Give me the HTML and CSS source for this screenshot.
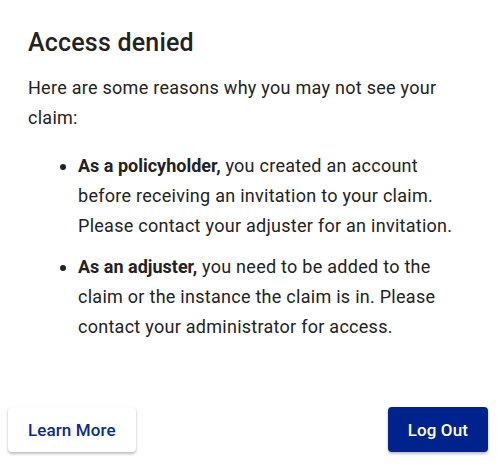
FILE: index.html
```html
<!DOCTYPE html>
<html lang="en">
<head>
<meta charset="utf-8">
<title>Access denied</title>
<link rel="stylesheet" href="styles.css">
</head>
<body>
<div class="dialog">
  <div class="content">
    <h1 class="title">Access denied</h1>
    <p class="intro">Here are some reasons why you may not see your claim:</p>
    <ul class="reasons">
      <li><strong>As a policyholder,</strong> you created an account before receiving an invitation to your claim. Please contact your adjuster for an invitation.</li>
      <li><strong>As an adjuster,</strong> you need to be added to the claim or the instance the claim is in. Please contact your administrator for access.</li>
    </ul>
  </div>
  <div class="actions">
    <button class="btn btn-secondary" type="button">Learn More</button>
    <button class="btn btn-primary" type="button">Log Out</button>
  </div>
</div>
</body>
</html>
```
FILE: styles.css
```css
* { box-sizing: border-box; }
html, body {
  margin: 0;
  padding: 0;
  background: #ffffff;
}
body {
  font-family: Roboto, "Liberation Sans", Arial, sans-serif;
  color: #222222;
  width: 498px;
  height: 472px;
  overflow: hidden;
}
.dialog {
  display: flex;
  flex-direction: column;
  justify-content: space-between;
  height: 472px;
  background: #fff;
}
.content {
  padding: 26px 28px 0 28px;
}
.title {
  margin: 0;
  font-size: 25px;
  font-weight: 500;
  line-height: 34px;
  letter-spacing: 0.2px;
  color: #222222;
}
.intro {
  margin: 13px 0 0 0;
  font-size: 18px;
  line-height: 30px;
  letter-spacing: 0.27px;
}
.reasons {
  margin: 18px 0 0 0;
  padding-left: 50px;
  font-size: 18px;
  line-height: 30px;
  letter-spacing: 0.27px;
}
.reasons li + li {
  margin-top: 11px;
}
.reasons strong {
  font-weight: 700;
  letter-spacing: 0;
}
.actions {
  display: flex;
  justify-content: space-between;
  padding: 0 10px 20px 8px;
}
.btn {
  font-family: Roboto, "Liberation Sans", Arial, sans-serif;
  font-size: 17px;
  font-weight: 500;
  letter-spacing: 0.1px;
  height: 45px;
  border: none;
  border-radius: 4px;
  padding: 0 20px;
  cursor: pointer;
  box-shadow: 0 2px 3px rgba(0, 0, 0, 0.25), 0 0 1px rgba(0, 0, 0, 0.12);
}
.btn-secondary {
  background: #ffffff;
  color: #0b2a8f;
}
.btn-primary {
  background: #00228c;
  color: #ffffff;
}
```
